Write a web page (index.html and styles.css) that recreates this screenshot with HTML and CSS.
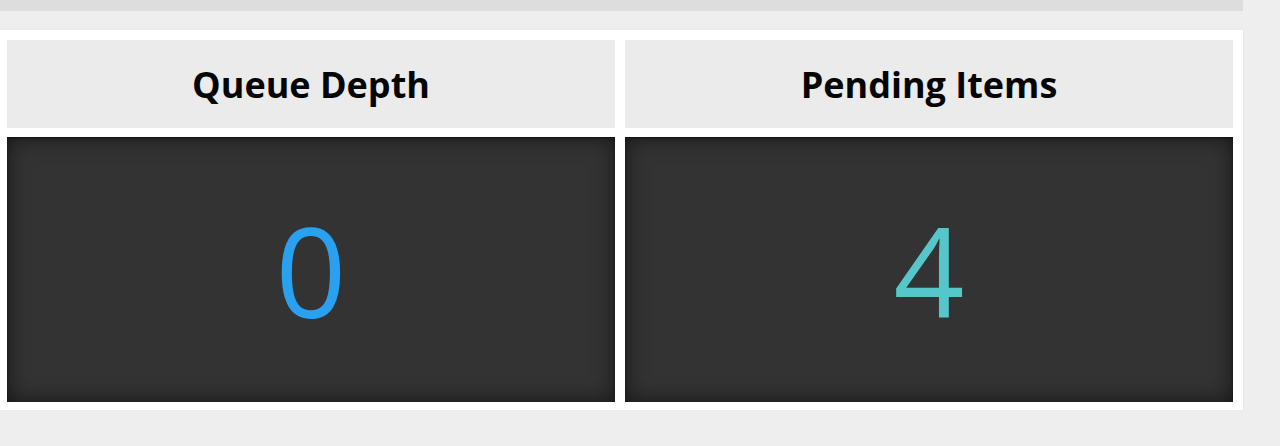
FILE: index.html
```html
<!DOCTYPE html>
<html lang="en">
<head>
    <meta charset="UTF-8">
    <meta name="viewport" content="width=device-width, initial-scale=1.0">
    <title>Queue Stats</title>
    <link rel="stylesheet" href="styles.css">
</head>
<body>
    <div class="topbar"></div>
    <main class="panel">
        <div class="stat">
            <div class="stat-title">Queue Depth</div>
            <div class="stat-value blue">0</div>
        </div>
        <div class="stat">
            <div class="stat-title">Pending Items</div>
            <div class="stat-value teal">4</div>
        </div>
    </main>
</body>
</html>
```

FILE: styles.css
```css
* {
    box-sizing: border-box;
}
html, body {
    margin: 0;
    padding: 0;
    background: #eeeeee;
    font-family: "Open Sans", "Liberation Sans", sans-serif;
}

.topbar {
    width: 1243px;
    height: 11px;
    background: #dddddd;
}

.panel {
    width: 1243px;
    margin-top: 19px;
    padding: 10px 10px 8px 7px;

    display: grid;
    grid-template-columns: repeat(2, 1fr);
    gap: 10px;

    background: #ffffff;
    box-shadow: 0 0 3px rgba(0, 0, 0, .06);
}

.stat {
    display: flex;
    flex-direction: column;
    gap: 9px;
}
.stat-title {
    height: 88px;
    display: flex;
    align-items: center;
    justify-content: center;

    background: #ebebeb;
    color: #050505;
    font-size: 36px;
    font-weight: 700;
}
.stat-value {
    height: 265px;
    display: flex;
    align-items: center;
    justify-content: center;

    background: #333333;
    box-shadow: inset 0 1px 2px rgba(0, 0, 0, .5), inset 0 0 22px rgba(0, 0, 0, .6);
    font-size: 124px;
    line-height: 1;
}
.blue {
    color: #29a1f0;
}
.teal {
    color: #55c7ca;
}
```
